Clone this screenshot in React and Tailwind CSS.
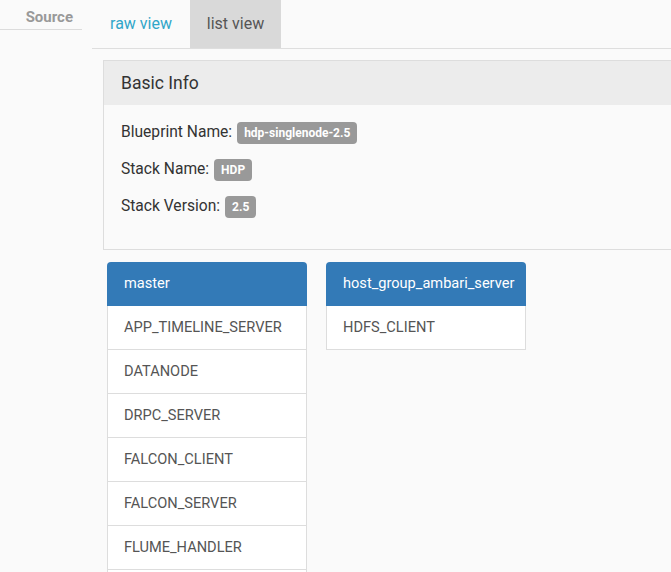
import React from "react";

const master = [
  "APP_TIMELINE_SERVER",
  "DATANODE",
  "DRPC_SERVER",
  "FALCON_CLIENT",
  "FALCON_SERVER",
  "FLUME_HANDLER",
  "",
];

function Badge({ children }) {
  return (
    <span className="inline-block rounded-[4px] bg-[#999999] px-[7px] pt-[4px] pb-[4px] text-[12px] font-bold leading-[14px] text-white align-middle">
      {children}
    </span>
  );
}

function HostGroup({ name, items }) {
  return (
    <div className="w-[200px] shrink-0">
      <div className="h-[44px] rounded-t-[4px] bg-[#337ab7] px-[17px] flex items-center text-[14.6px] text-white">
        {name}
      </div>
      <div className="border-x border-[#dddddd] bg-white">
        {items.map((it, i) => (
          <div
            key={i}
            className="h-[44px] border-b border-[#dddddd] px-[16px] flex items-center text-[14.6px] text-[#555555]"
          >
            {it}
          </div>
        ))}
      </div>
    </div>
  );
}

export default function App() {
  return (
    <div
      className="h-[572px] w-[671px] overflow-hidden bg-[#fafafa] flex"
      style={{ fontFamily: "Roboto, 'Liberation Sans', sans-serif" }}
    >
      <div className="w-[82px] shrink-0">
        <div className="h-[30px] border-b border-[#dcdcdc] flex items-end justify-end pr-[9px] pb-[2px] text-[15px] leading-[20px] font-bold text-[#999999]">
          Source
        </div>
      </div>
      <div className="ml-[10px] flex-1 min-w-0">
        <div className="flex h-[49px] border-b border-[#dedede]">
          <div className="w-[98px] flex items-center justify-center text-[16px] text-[#31a6c9]">
            raw view
          </div>
          <div className="w-[91px] bg-[#d9d9d9] flex items-center justify-center text-[16px] text-[#555555]">
            list view
          </div>
        </div>
        <div className="ml-[11px] mt-[11px] w-[600px] border border-[#dddddd] border-r-0">
          <div className="h-[44px] bg-[#ececec] px-[17px] flex items-center text-[17.5px] text-[#333333]">
            Basic Info
          </div>
          <div className="bg-[#fafafa] px-[17px] pt-[17px] pb-[31px] flex flex-col gap-[15px] text-[15.6px] text-[#333333]">
            <div className="flex items-center gap-[5px] h-[22px]">
              <span>Blueprint Name:</span>
              <Badge>hdp-singlenode-2.5</Badge>
            </div>
            <div className="flex items-center gap-[5px] h-[22px]">
              <span>Stack Name:</span>
              <Badge>HDP</Badge>
            </div>
            <div className="flex items-center gap-[5px] h-[22px]">
              <span>Stack Version:</span>
              <Badge>2.5</Badge>
            </div>
          </div>
        </div>
        <div className="ml-[15px] mt-[12px] flex items-start gap-[19px]">
          <HostGroup name="master" items={master} />
          <HostGroup name="host_group_ambari_server" items={["HDFS_CLIENT"]} />
        </div>
      </div>
    </div>
  );
}
